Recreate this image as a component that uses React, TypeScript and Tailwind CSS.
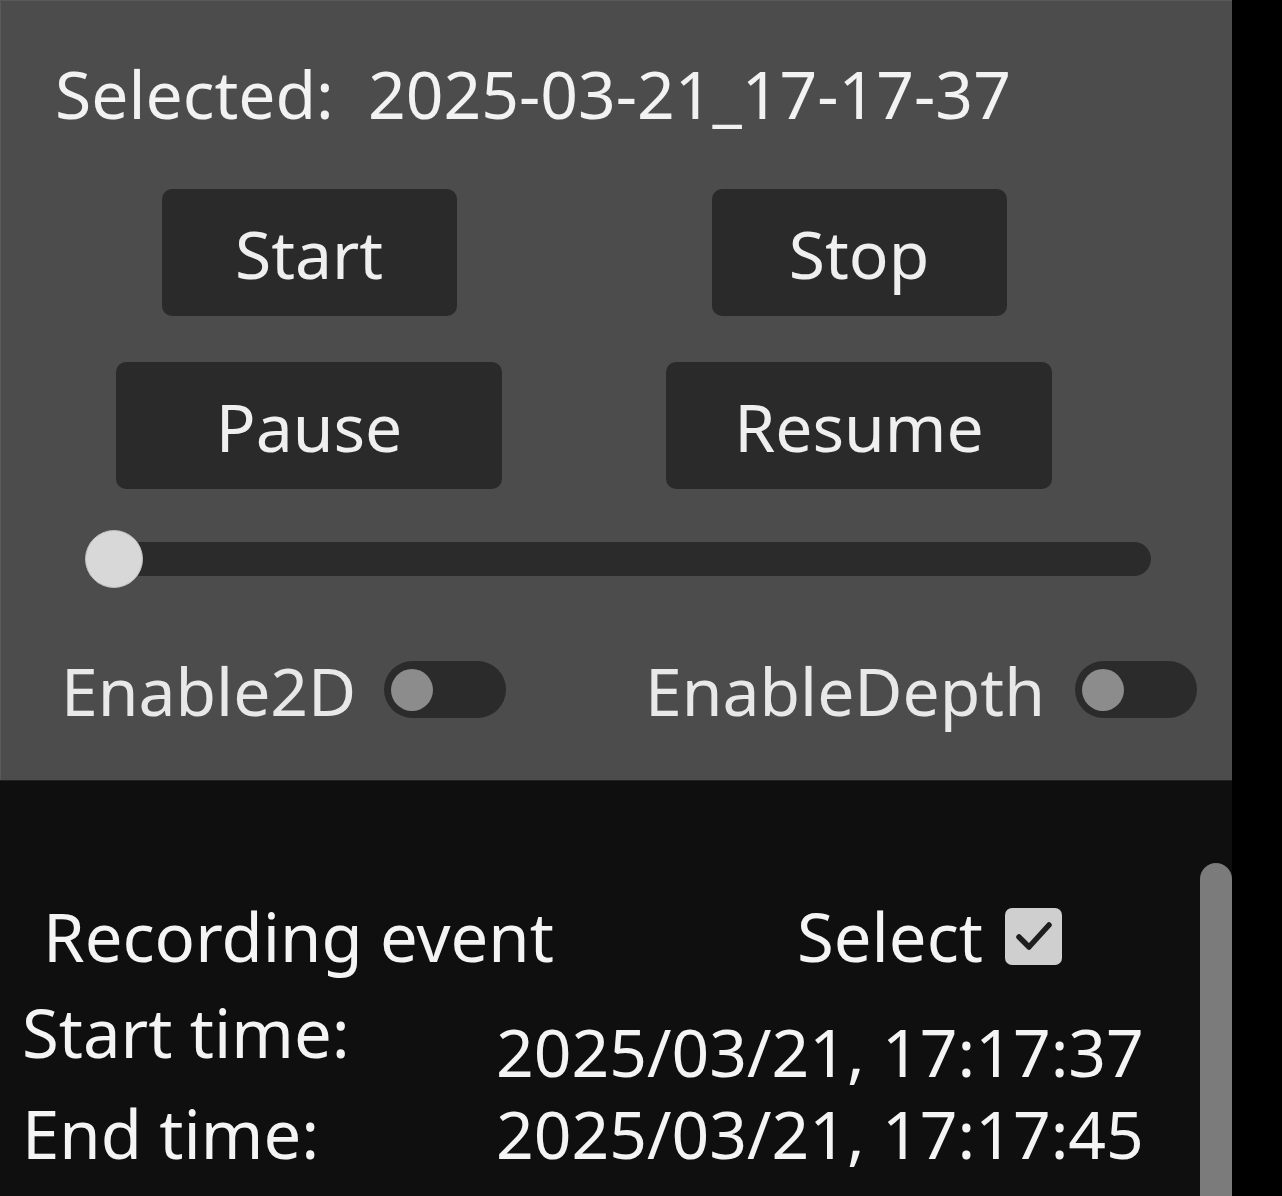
import React from 'react';

const font = { fontFamily: '"Noto Sans", "Open Sans", sans-serif' };

function PanelButton({ label, width }: { label: string; width: string }) {
  return (
    <button
      className={`${width} h-[127px] rounded-[10px] bg-[#2a2a2a] text-[66px] leading-none text-[#efefef] flex items-center justify-center`}
    >
      {label}
    </button>
  );
}

function Toggle() {
  return (
    <div className="w-[122px] h-[57px] rounded-full bg-[#2b2b2b] flex items-center px-[7px]">
      <div className="w-[42px] h-[42px] rounded-full bg-[#8c8c8c]" />
    </div>
  );
}

export default function App() {
  return (
    <div className="flex w-[1282px] h-[1196px] bg-black overflow-hidden" style={font}>
      <div className="w-[1232px] flex flex-col">
        {/* Controls panel */}
        <div className="h-[780px] bg-[#4c4c4c] border-t border-l border-[#5a5a5a] pt-[59px]">
          <div className="pl-[54px] text-[66px] leading-none h-[66px] text-[#f2f2f2] whitespace-pre">
            Selected:  2025-03-21_17-17-37
          </div>

          <div className="mt-[63px] ml-[33px] w-[1100px] grid grid-cols-2 gap-y-[46px] justify-items-center">
            <PanelButton label="Start" width="w-[295px]" />
            <PanelButton label="Stop" width="w-[295px]" />
            <PanelButton label="Pause" width="w-[386px]" />
            <PanelButton label="Resume" width="w-[386px]" />
          </div>

          {/* Slider */}
          <div className="relative mt-[40px] ml-[84px] w-[1066px] h-[60px]">
            <div className="absolute left-[16px] right-0 top-[13px] h-[34px] rounded-full bg-[#2b2b2b]" />
            <div className="absolute left-0 top-[1px] w-[58px] h-[58px] rounded-full bg-[#d8d8d8] border border-[#bdbdbd]" />
          </div>

          {/* Toggles */}
          <div className="mt-[72px] ml-[60px] flex items-center h-[57px] text-[66px] leading-none text-[#e8e8e8]">
            <div className="w-[584px] flex items-center gap-[28px]">
              <span>Enable2D</span>
              <Toggle />
            </div>
            <div className="flex items-center gap-[30px]">
              <span>EnableDepth</span>
              <Toggle />
            </div>
          </div>
        </div>

        {/* Recording event list */}
        <div className="relative flex-1 bg-[#0f0f0f] border-t border-[#222] pt-[122px] text-[67px] leading-none text-[#f4f4f4]">
          <div className="flex items-center h-[66px]">
            <div className="pl-[43px] w-[797px]">Recording event</div>
            <span>Select</span>
            <div className="ml-[22px] w-[57px] h-[57px] rounded-[7px] bg-[#cfcfcf] flex items-center justify-center">
              <svg width="40" height="36" viewBox="0 0 40 36" fill="none">
                <path d="M5 19 L15 29 L35 7" stroke="#1e1e1e" strokeWidth="5.5" strokeLinecap="round" strokeLinejoin="round" />
              </svg>
            </div>
          </div>

          <div className="mt-[30px] flex pl-[22px]">
            <div className="w-[474px]">Start time:</div>
            <div className="mt-[19px] text-[66px]">2025/03/21, 17:17:37</div>
          </div>
          <div className="mt-[16px] flex pl-[22px]">
            <div className="w-[474px]">End time:</div>
            <div className="text-[66px]">2025/03/21, 17:17:45</div>
          </div>

          {/* scrollbar */}
          <div className="absolute right-0 top-[82px] bottom-0 w-[32px] rounded-t-full bg-[#7b7b7b]" />
        </div>
      </div>
      <div className="flex-1 bg-black" />
    </div>
  );
}
